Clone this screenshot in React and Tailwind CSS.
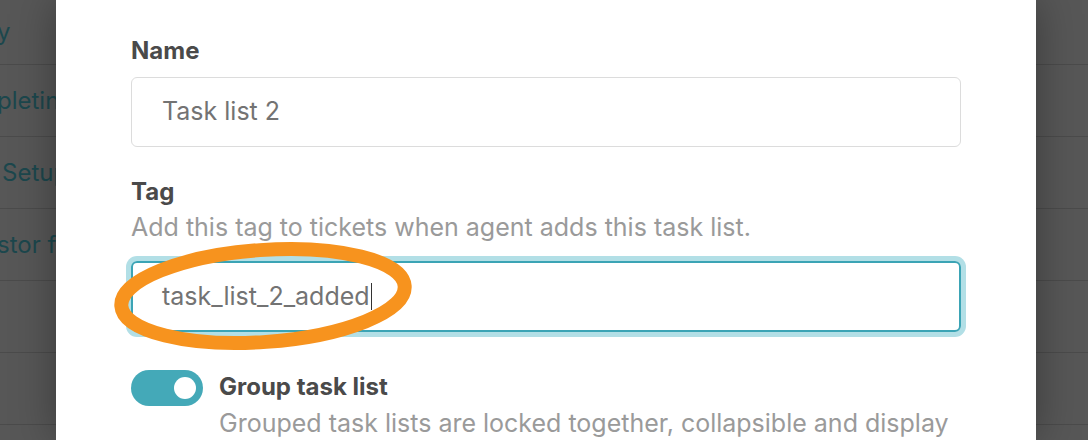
const rows = [
  { label: "y", h: "h-[65px]" },
  { label: "pleting", h: "h-[72px]" },
  { label: "Setup", h: "h-[72px]" },
  { label: "stor for", h: "h-[72px]" },
  { label: "", h: "h-[72px]" },
  { label: "", h: "h-[72px]" },
  { label: "", h: "h-[72px]" },
]

function Backdrop() {
  return (
    <div className="flex flex-col">
      {rows.map((r, i) => (
        <div
          key={i}
          className={`${r.h} flex items-center border-b border-[#4b4b4b] text-[24px] text-[#1c474d] whitespace-nowrap overflow-hidden`}
        >
          <span className={i === 2 ? "ml-[2px]" : "-ml-[3px]"}>{r.label}</span>
        </div>
      ))}
    </div>
  )
}

function Toggle() {
  return (
    <div className="w-[72px] h-[36px] rounded-full bg-[#44a9b8] flex items-center justify-end pr-[7px] shrink-0">
      <div className="w-[22px] h-[22px] rounded-full bg-white" />
    </div>
  )
}

export default function App() {
  return (
    <div
      className="relative w-[1088px] h-[440px] overflow-hidden bg-[#575757]"
      style={{ fontFamily: "Inter, 'Open Sans', sans-serif" }}
    >
      <Backdrop />

      {/* modal */}
      <div className="absolute left-[56px] top-0 w-[980px] h-[440px] bg-white shadow-[0_0_40px_rgba(0,0,0,0.35)]">
        <div className="px-[75px] pt-[35px]">
          <div className="text-[24px] leading-[32px] font-bold text-[#4a4a4a]">Name</div>
          <div className="mt-[10px] h-[70px] rounded-[6px] border border-[#dcdcdc] flex items-center pl-[30px] text-[25px] text-[#737373]">
            Task list 2
          </div>

          <div className="mt-[29px] text-[24px] leading-[32px] font-bold text-[#4a4a4a]">Tag</div>
          <div className="mt-[3px] text-[25px] leading-[32px] text-[#9a9a9a]">
            Add this tag to tickets when agent adds this task list.
          </div>
          <div className="mt-[18px] h-[71px] rounded-[6px] border-2 border-[#3ba4b5] ring-[5px] ring-[#b2dfe6] flex items-center pl-[29px] text-[25px] text-[#737373]">
            task_list_2_added
            <span className="ml-[1px] w-[1.5px] h-[27px] bg-[#333]" />
          </div>

          <div className="mt-[38px] flex gap-[16px]">
            <Toggle />
            <div className="flex flex-col">
              <div className="pt-[1px] text-[24px] leading-[32px] font-bold text-[#4a4a4a]">Group task list</div>
              <div className="mt-[4px] text-[25px] leading-[32px] text-[#9a9a9a] whitespace-nowrap">
                Grouped task lists are locked together, collapsible and display
              </div>
            </div>
          </div>
        </div>
      </div>

      {/* annotation */}
      <svg className="absolute left-0 top-0 pointer-events-none" width="1088" height="440">
        <ellipse
          cx="263"
          cy="296"
          rx="142"
          ry="46"
          fill="none"
          stroke="#f7931e"
          strokeWidth="14"
          transform="rotate(-4 263 296)"
        />
      </svg>
    </div>
  )
}
